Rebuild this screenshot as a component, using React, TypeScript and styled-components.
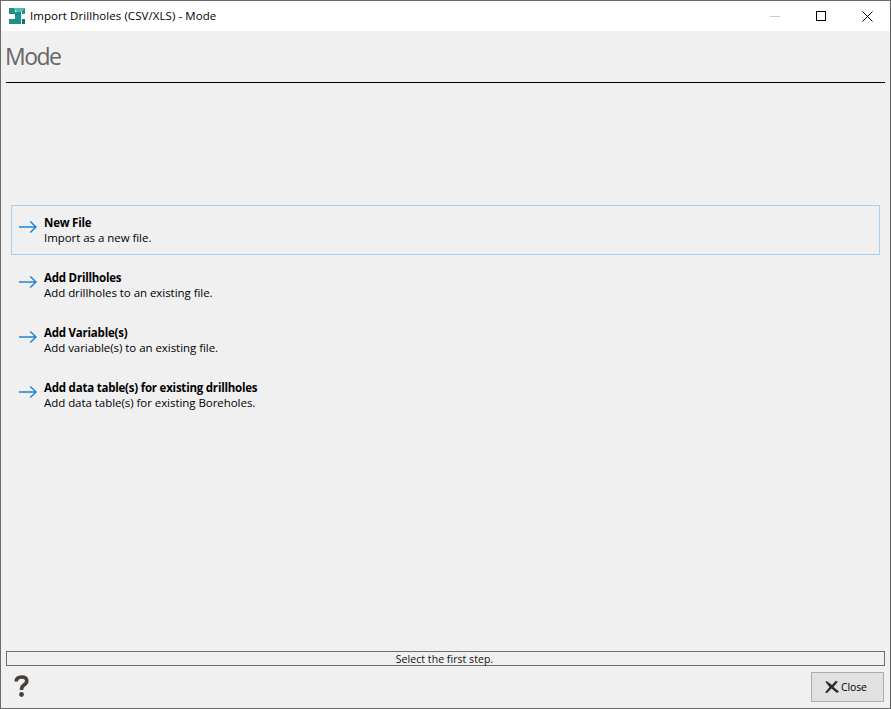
import React from "react";
import styled, { createGlobalStyle } from "styled-components";

const Global = createGlobalStyle`
  html, body { margin: 0; padding: 0; }
  body { background: #f0f0f0; font-family: "Open Sans", "Noto Sans", sans-serif; }
`;

const Window = styled.div`
  width: 891px;
  height: 709px;
  box-sizing: border-box;
  border: 1px solid #6a6a6a;
  border-right-color: #5c5c5c;
  display: flex;
  flex-direction: column;
  background: #f0f0f0;
  color: #000;
`;

const TitleBar = styled.header`
  height: 30px;
  flex: none;
  background: #fff;
  display: flex;
  align-items: center;
  padding-left: 8px;
`;

const Logo = styled.svg`
  width: 16px;
  height: 16px;
  flex: none;
  margin-top: -1px;
`;

const TitleText = styled.span`
  margin: -2px 0 0 5px;
  font-size: 11.5px;
  letter-spacing: 0.07px;
  white-space: nowrap;
  flex: 1;
`;

const WinButton = styled.div`
  width: 46px;
  height: 30px;
  display: flex;
  align-items: center;
  justify-content: center;
`;

const Content = styled.main`
  flex: 1;
  display: flex;
  flex-direction: column;
  padding: 0 5px;
  min-height: 0;
`;

const PageTitle = styled.h1`
  margin: 0;
  height: 52px;
  box-sizing: border-box;
  padding-top: 8px;
  font-size: 23px;
  line-height: 34px;
  font-weight: 400;
  letter-spacing: -1.5px;
  text-indent: -1px;
  color: #666;
  border-bottom: 1px solid #000;
`;

const Options = styled.div`
  flex: 1;
  display: flex;
  flex-direction: column;
  gap: 5px;
  padding: 122px 5px 0 5px;
`;

const Option = styled.div<{ $active?: boolean }>`
  height: 50px;
  box-sizing: border-box;
  border: 1px solid ${(p) => (p.$active ? "#a9d0ee" : "transparent")};
  display: flex;
  align-items: flex-start;
  padding: 9px 0 0 7px;
  gap: 7px;
`;

const ArrowIcon = styled.svg`
  width: 18px;
  height: 12px;
  flex: none;
  margin-top: 6px;
`;

const OptionText = styled.div`
  display: flex;
  flex-direction: column;
  font-size: 11.5px;
  line-height: 15px;
  letter-spacing: -0.05px;
  white-space: nowrap;
`;

const OptionTitle = styled.strong`
  font-weight: 700;
  letter-spacing: -0.22px;
`;

const StatusBar = styled.div`
  height: 15px;
  box-sizing: border-box;
  flex: none;
  border: 1px solid #6e6e6e;
  text-align: center;
  font-size: 10.5px;
  line-height: 14px;
  color: #111;
  letter-spacing: 0.05px;
  text-indent: -2px;
`;

const Footer = styled.footer`
  height: 42px;
  box-sizing: border-box;
  flex: none;
  display: flex;
  align-items: flex-start;
  justify-content: space-between;
  padding: 6px 1px 0 8px;
`;

const HelpIcon = styled.svg`
  width: 15px;
  height: 22px;
  margin-top: 3px;
`;

const CloseButton = styled.div`
  width: 73px;
  height: 30px;
  box-sizing: border-box;
  border: 1px solid #adadad;
  background: #e1e1e1;
  display: flex;
  align-items: center;
  gap: 2px;
  padding-left: 13px;
  font-size: 10.5px;
  letter-spacing: -0.15px;
`;

const Arrow = () => (
  <ArrowIcon viewBox="0 0 18 12">
    <path d="M0 6H17M11.3 0.5L17 6L11.3 11.5" fill="none" stroke="#1e84d8" strokeWidth="1.5" />
  </ArrowIcon>
);

const options = [
  { title: "New File", text: "Import as a new file.", active: true },
  { title: "Add Drillholes", text: "Add drillholes to an existing file." },
  { title: "Add Variable(s)", text: "Add variable(s) to an existing file." },
  { title: "Add data table(s) for existing drillholes", text: "Add data table(s) for existing Boreholes." },
];

export default function App() {
  return (
    <>
      <Global />
      <Window>
        <TitleBar>
          <Logo viewBox="0 0 16 16">
            <path d="M0 0H6V6H0ZM0 11H6V16H0Z" fill="#1f9089" />
            <path d="M6 4H12V16H6Z" fill="#1f9089" />
            <path d="M4 0H16L12 4H8Z" fill="#4fbdb5" />
            <path d="M13 3L16 0V6H13Z" fill="#1f9089" />
            <rect x="13" y="11" width="3" height="5" fill="#17756f" />
          </Logo>
          <TitleText>Import Drillholes (CSV/XLS) - Mode</TitleText>
          <WinButton>
            <svg width="10" height="10"><rect x="0" y="5" width="10" height="1" fill="#c8c8c8" /></svg>
          </WinButton>
          <WinButton>
            <svg width="10" height="10"><rect x="0.5" y="0.5" width="9" height="9" fill="none" stroke="#000" /></svg>
          </WinButton>
          <WinButton>
            <svg width="11" height="11"><path d="M0.5 0.5L10.5 10.5M10.5 0.5L0.5 10.5" stroke="#000" fill="none" /></svg>
          </WinButton>
        </TitleBar>
        <Content>
          <PageTitle>Mode</PageTitle>
          <Options>
            {options.map((o) => (
              <Option key={o.title} $active={o.active}>
                <Arrow />
                <OptionText>
                  <OptionTitle>{o.title}</OptionTitle>
                  <span>{o.text}</span>
                </OptionText>
              </Option>
            ))}
          </Options>
          <StatusBar>Select the first step.</StatusBar>
          <Footer>
            <HelpIcon viewBox="0 0 15 22">
              <path d="M2.2 6.5C2.2 3.5 4.2 2 7.5 2C10.8 2 12.8 3.5 12.8 6C12.8 8 11.5 9 9.7 10.2C8.3 11.2 7.5 12 7.5 15" fill="none" stroke="#4a3f3a" strokeWidth="3.6" />
              <circle cx="7.5" cy="19.5" r="2.4" fill="#4a3f3a" />
            </HelpIcon>
            <CloseButton>
              <svg width="14" height="12" viewBox="0 0 14 12">
                <path d="M1.5 0L7 4L10.5 0L13 0.5L8.5 6L14 10.5L12 12L6.5 7.5L2 12L0 11.5L4.5 6L0.5 1Z" fill="#2c2c2c" />
              </svg>
              Close
            </CloseButton>
          </Footer>
        </Content>
      </Window>
    </>
  );
}
